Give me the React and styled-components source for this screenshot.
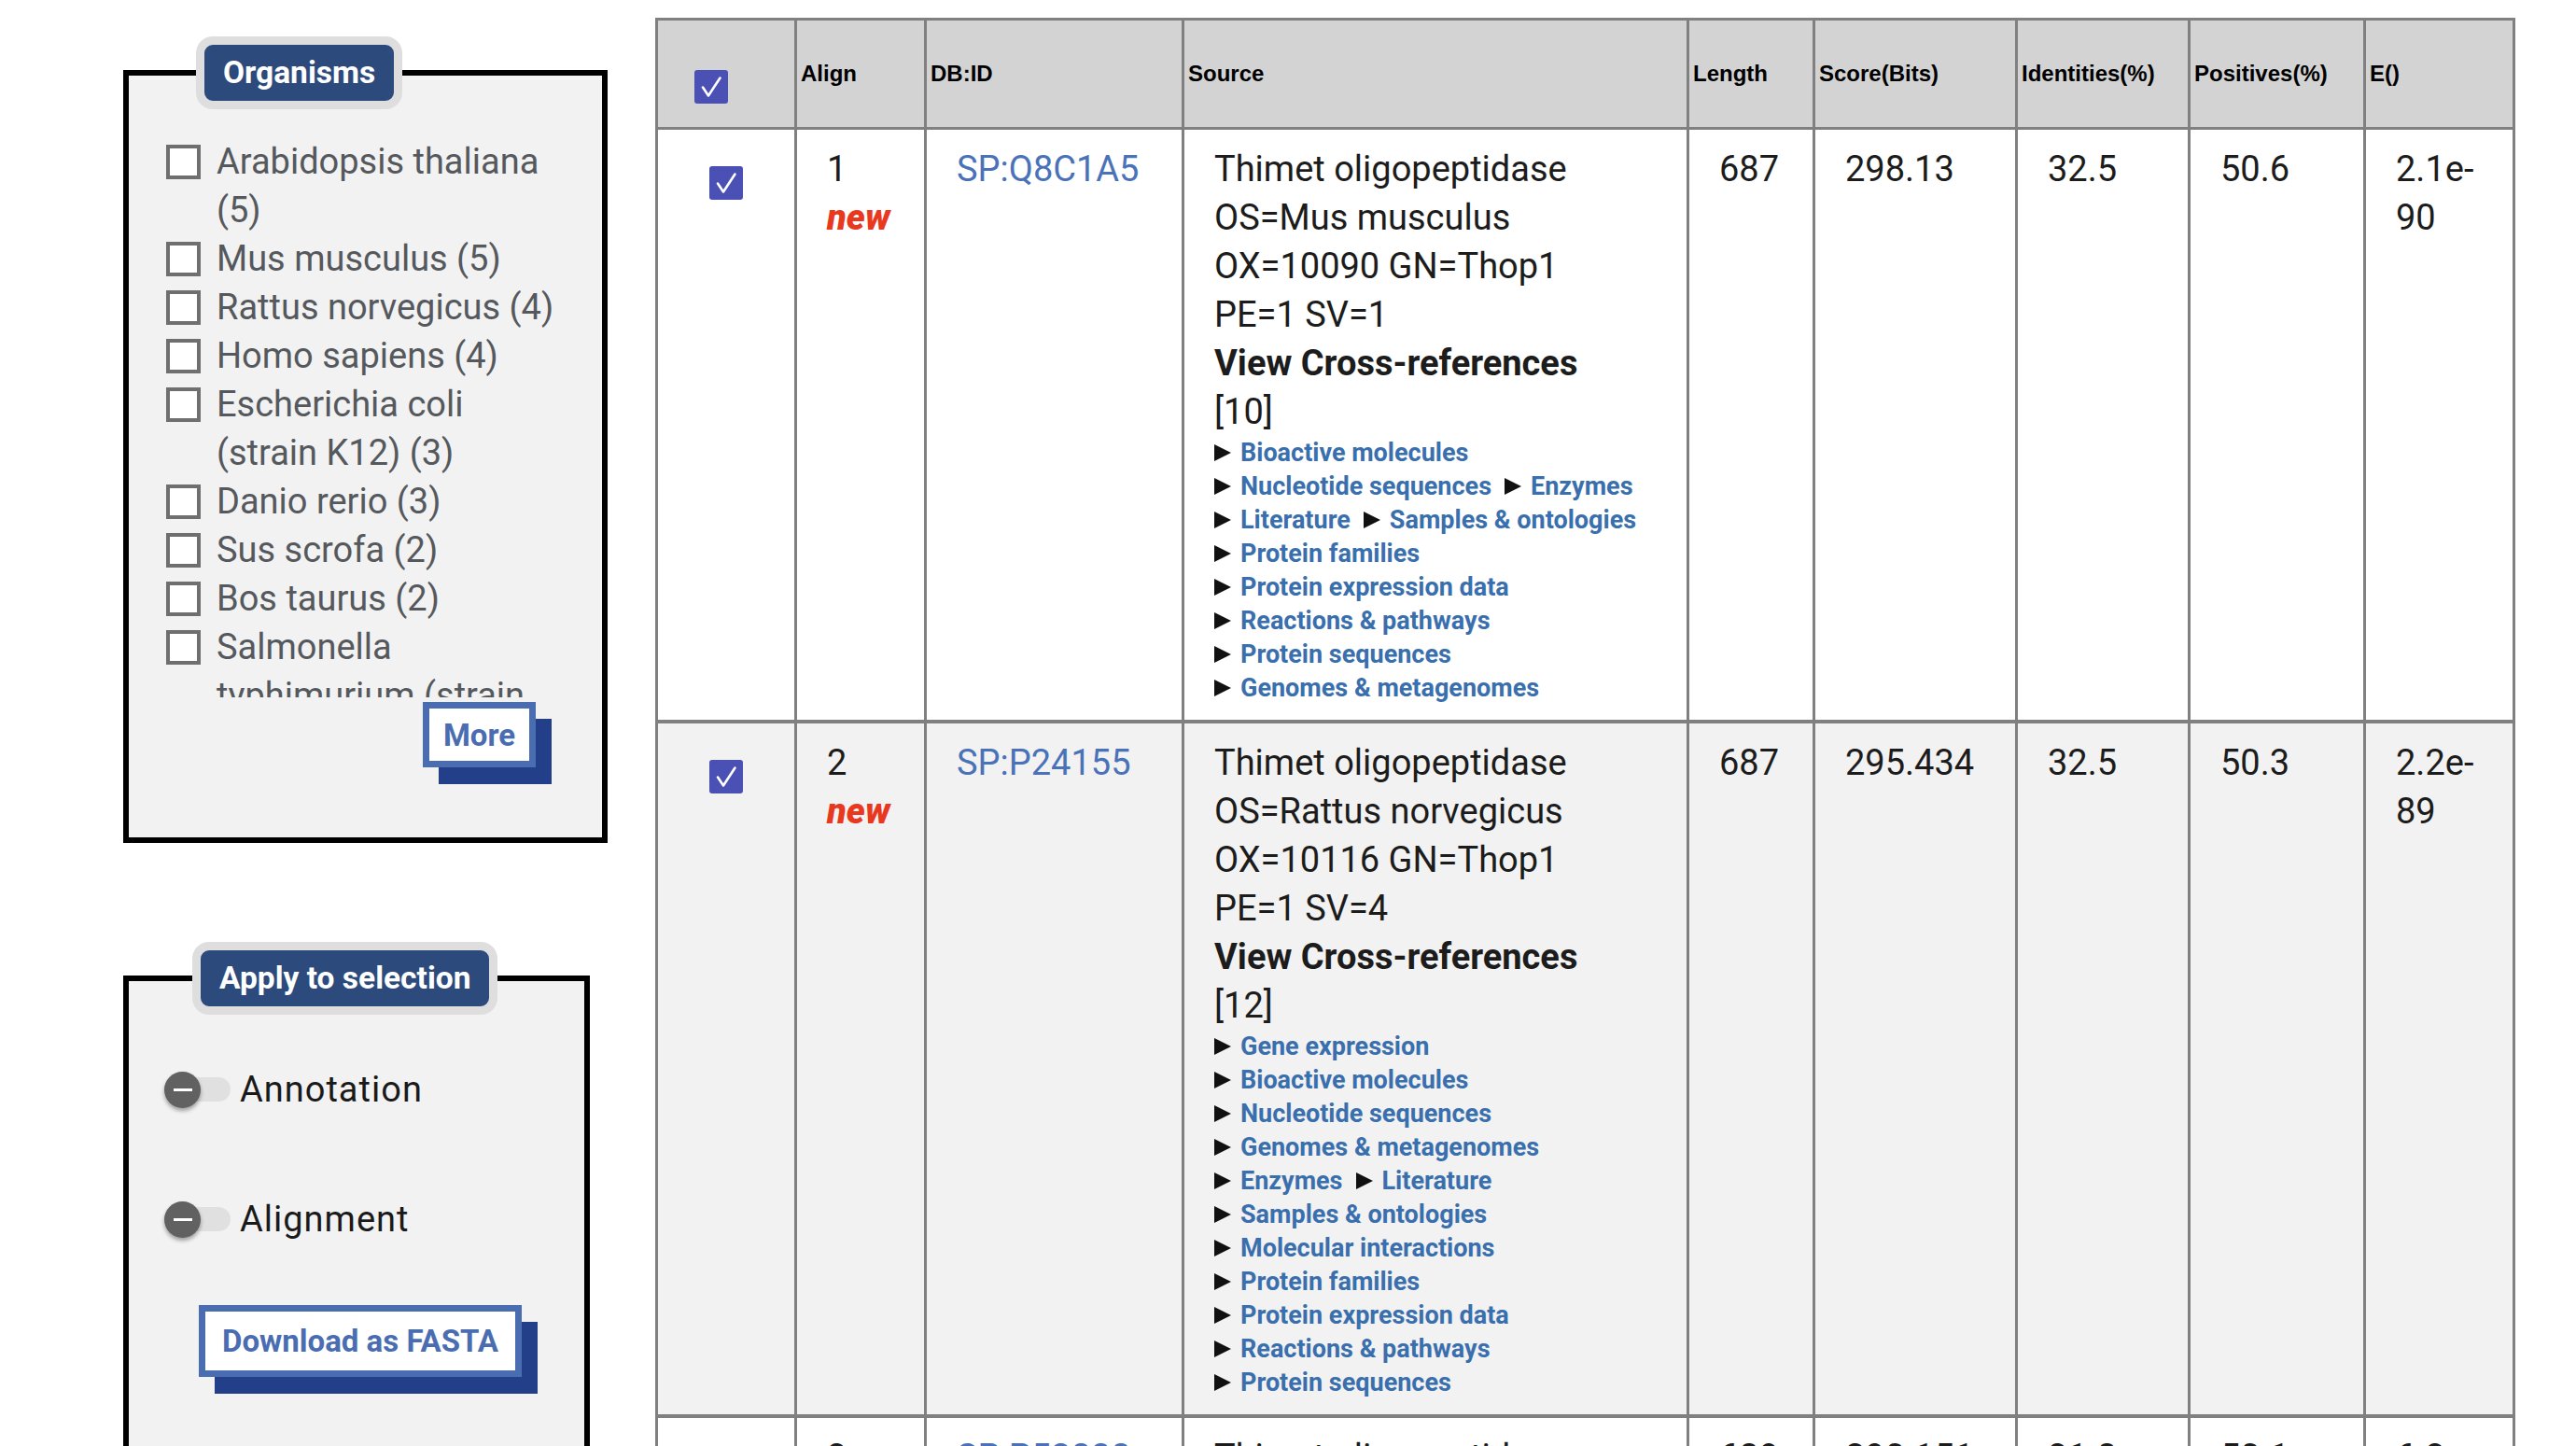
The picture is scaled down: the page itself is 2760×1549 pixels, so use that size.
import React from 'react';
import styled, { createGlobalStyle } from 'styled-components';

const GlobalStyle = createGlobalStyle`
  html, body { margin: 0; padding: 0; background: #fff; }
  body { font-family: Roboto, "Noto Sans", sans-serif; color: #1c1c1c; }
  * { box-sizing: border-box; }
`;

const Page = styled.div`
  display: flex;
  align-items: flex-start;
  gap: 51px;
  padding: 19px 0 0 132px;
  width: 2760px;
  height: 1549px;
  overflow: hidden;
`;

const Sidebar = styled.aside`
  flex: none;
  display: flex;
  flex-direction: column;
  align-items: flex-start;
  gap: 106px;
  width: 519px;
  margin-top: 20px;
`;

const Panel = styled.fieldset`
  margin: 0;
  min-width: 0;
  width: ${p => p.$width}px;
  border: 6px solid #000;
  background: #f2f2f2;
  padding: ${p => p.$padding};
`;

const PanelTitle = styled.legend`
  margin-left: ${p => p.$offset}px;
  padding: 0 20px;
  background: #2c4a7c;
  color: #fff;
  border: 9px solid #dedede;
  border-radius: 18px;
  font: 700 33.5px/60px Roboto, sans-serif;
`;

const OrganismList = styled.ul`
  list-style: none;
  margin: 0;
  padding: 0;
  max-height: 600px;
  overflow: hidden;
`;

const OrganismItem = styled.li`
  display: flex;
  align-items: flex-start;
  gap: 17px;
  font-size: 38px;
  line-height: 52px;
  color: #55595d;
`;

const EmptyBox = styled.span`
  flex: none;
  width: 37px;
  height: 37px;
  margin-top: 8px;
  border: 4px solid #6f6f6f;
  background: #fff;
`;

const ButtonRow = styled.div`
  display: flex;
  justify-content: ${p => (p.$end ? 'flex-end' : 'flex-start')};
  margin: ${p => p.$margin};
`;

const ShadowButton = styled.button`
  height: ${p => p.$height}px;
  padding: 0 ${p => p.$pad}px;
  background: #fff;
  border: 7px solid #4a6db1;
  color: #4a6db1;
  font: 700 33px/1 Roboto, sans-serif;
  box-shadow: 17px 18px 0 #233f8a;
  cursor: pointer;
`;

const ToggleList = styled.div`
  display: flex;
  flex-direction: column;
  gap: 87px;
`;

const ToggleRow = styled.label`
  display: flex;
  align-items: center;
  gap: 10px;
  height: 52px;
  font-size: 38px;
  letter-spacing: 1px;
  color: #1a1a1a;
`;

const Switch = styled.span`
  position: relative;
  flex: none;
  display: flex;
  align-items: center;
  width: 71px;
  height: 39px;
`;

const Track = styled.span`
  width: 100%;
  height: 26px;
  border-radius: 13px;
  background: #e0e0e0;
`;

const Knob = styled.span`
  position: absolute;
  left: 0;
  top: 0;
  width: 39px;
  height: 39px;
  border-radius: 50%;
  background: #616161;
  box-shadow: 0 3px 4px rgba(0, 0, 0, 0.35);
  display: flex;
  align-items: center;
  justify-content: center;
  &::after {
    content: '';
    width: 20px;
    height: 3px;
    background: #fff;
  }
`;

const Results = styled.table`
  flex: none;
  width: 1990px;
  table-layout: fixed;
  border-collapse: collapse;
  border: 3px solid #808080;
`;

const HeadCell = styled.th`
  height: 117px;
  padding: 0 4px;
  text-align: left;
  vertical-align: middle;
  background: #d3d3d3;
  border: 3px solid #808080;
  font: 700 24px/1.2 "Liberation Sans", Arial, sans-serif;
  color: #000;
`;

const Row = styled.tr`
  background: ${p => (p.$shade ? '#f2f2f2' : '#fff')};
`;

const Cell = styled.td`
  vertical-align: top;
  padding: ${p => (p.$check ? '39px 0 16px' : '16px 20px 16px 32px')};
  border: 3px solid #808080;
  border-top-width: ${p => (p.$first ? 3 : 4)}px;
  font-size: 38px;
  line-height: 52px;
  color: #1c1c1c;
  white-space: nowrap;
`;

const Tick = styled.span`
  display: block;
  width: 36px;
  height: 36px;
  border-radius: 3px;
  background: #4a50b4;
  margin: ${p => (p.$head ? '28px 0 0 35px' : '0 auto')};
  svg { display: block; }
`;

const NewTag = styled.div`
  color: #e8391f;
  font-style: italic;
  font-weight: 900;
`;

const IdLink = styled.a`
  color: #4a72b8;
  text-decoration: none;
`;

const Line = styled.div``;

const XrefTitle = styled.div`
  font-weight: 700;
`;

const XrefLine = styled.div`
  display: flex;
  gap: 14px;
  font-size: 27px;
  line-height: 36px;
  font-weight: 700;
`;

const Xref = styled.a`
  display: inline-flex;
  align-items: center;
  gap: 10px;
  color: #3a6fae;
  text-decoration: none;
  &::before {
    content: '';
    border-left: 18px solid #111;
    border-top: 9.5px solid transparent;
    border-bottom: 9.5px solid transparent;
  }
`;

const CheckMark = ({ head }) => (
  <Tick $head={head}>
    <svg width="36" height="36" viewBox="0 0 36 36">
      <path d="M9 18.5 L15 27.5 L27.5 8.5" fill="none" stroke="#fff" strokeWidth="2.6" strokeLinecap="round" strokeLinejoin="round" />
    </svg>
  </Tick>
);

const organisms = [
  'Arabidopsis thaliana (5)',
  'Mus musculus (5)',
  'Rattus norvegicus (4)',
  'Homo sapiens (4)',
  'Escherichia coli (strain K12) (3)',
  'Danio rerio (3)',
  'Sus scrofa (2)',
  'Bos taurus (2)',
  'Salmonella typhimurium (strain LT2) (2)',
  'Gallus gallus (1)',
];

const columns = ['Align', 'DB:ID', 'Source', 'Length', 'Score(Bits)', 'Identities(%)', 'Positives(%)', 'E()'];
const widths = [149, 139, 276, 541, 135, 217, 185, 188, 160];

const results = [
  {
    n: 1,
    id: 'SP:Q8C1A5',
    lines: ['Thimet oligopeptidase', 'OS=Mus musculus', 'OX=10090 GN=Thop1', 'PE=1 SV=1'],
    count: 10,
    xrefs: [
      ['Bioactive molecules'],
      ['Nucleotide sequences', 'Enzymes'],
      ['Literature', 'Samples & ontologies'],
      ['Protein families'],
      ['Protein expression data'],
      ['Reactions & pathways'],
      ['Protein sequences'],
      ['Genomes & metagenomes'],
    ],
    length: 687,
    score: '298.13',
    ident: '32.5',
    pos: '50.6',
    e: ['2.1e-', '90'],
  },
  {
    n: 2,
    id: 'SP:P24155',
    lines: ['Thimet oligopeptidase', 'OS=Rattus norvegicus', 'OX=10116 GN=Thop1', 'PE=1 SV=4'],
    count: 12,
    xrefs: [
      ['Gene expression'],
      ['Bioactive molecules'],
      ['Nucleotide sequences'],
      ['Genomes & metagenomes'],
      ['Enzymes', 'Literature'],
      ['Samples & ontologies'],
      ['Molecular interactions'],
      ['Protein families'],
      ['Protein expression data'],
      ['Reactions & pathways'],
      ['Protein sequences'],
    ],
    length: 687,
    score: '295.434',
    ident: '32.5',
    pos: '50.3',
    e: ['2.2e-', '89'],
  },
  {
    n: 3,
    id: 'SP:P52888',
    lines: ['Thimet oligopeptidase', 'OS=Homo sapiens', 'OX=9606 GN=THOP1', 'PE=1 SV=2'],
    count: 14,
    xrefs: [['Gene expression']],
    length: 689,
    score: '290.151',
    ident: '31.8',
    pos: '50.1',
    e: ['6.3e-', '88'],
  },
];

export default function App() {
  return (
    <>
      <GlobalStyle />
      <Page>
        <Sidebar>
          <Panel $width={519} $padding="30px 40px 75px 40px">
            <PanelTitle $offset={32}>Organisms</PanelTitle>
            <OrganismList>
              {organisms.map(o => (
                <OrganismItem key={o}>
                  <EmptyBox />
                  <span>{o}</span>
                </OrganismItem>
              ))}
            </OrganismList>
            <ButtonRow $end $margin="5px 31px 0 0">
              <ShadowButton $height={70} $pad={15}>More</ShadowButton>
            </ButtonRow>
          </Panel>
          <Panel $width={500} $padding="54px 38px 300px 38px">
            <PanelTitle $offset={30}>Apply to selection</PanelTitle>
            <ToggleList>
              <ToggleRow>
                <Switch><Track /><Knob /></Switch>
                Annotation
              </ToggleRow>
              <ToggleRow>
                <Switch><Track /><Knob /></Switch>
                Alignment
              </ToggleRow>
            </ToggleList>
            <ButtonRow $margin="66px 0 0 37px">
              <ShadowButton $height={77} $pad={18}>Download as FASTA</ShadowButton>
            </ButtonRow>
          </Panel>
        </Sidebar>

        <Results>
          <colgroup>
            {widths.map((w, i) => <col key={i} style={{ width: w }} />)}
          </colgroup>
          <thead>
            <tr>
              <HeadCell><CheckMark head /></HeadCell>
              {columns.map(c => <HeadCell key={c}>{c}</HeadCell>)}
            </tr>
          </thead>
          <tbody>
            {results.map((r, i) => (
              <Row key={r.id} $shade={i % 2 === 1}>
                <Cell $check $first={i === 0}><CheckMark /></Cell>
                <Cell $first={i === 0}>
                  <Line>{r.n}</Line>
                  <NewTag>new</NewTag>
                </Cell>
                <Cell $first={i === 0}><IdLink href="#">{r.id}</IdLink></Cell>
                <Cell $first={i === 0}>
                  {r.lines.map(l => <Line key={l}>{l}</Line>)}
                  <XrefTitle>View Cross-references</XrefTitle>
                  <Line>[{r.count}]</Line>
                  {r.xrefs.map((group, gi) => (
                    <XrefLine key={gi}>
                      {group.map(x => <Xref key={x} href="#">{x}</Xref>)}
                    </XrefLine>
                  ))}
                </Cell>
                <Cell $first={i === 0}>{r.length}</Cell>
                <Cell $first={i === 0}>{r.score}</Cell>
                <Cell $first={i === 0}>{r.ident}</Cell>
                <Cell $first={i === 0}>{r.pos}</Cell>
                <Cell $first={i === 0}>
                  {r.e.map(p => <Line key={p}>{p}</Line>)}
                </Cell>
              </Row>
            ))}
          </tbody>
        </Results>
      </Page>
    </>
  );
}
